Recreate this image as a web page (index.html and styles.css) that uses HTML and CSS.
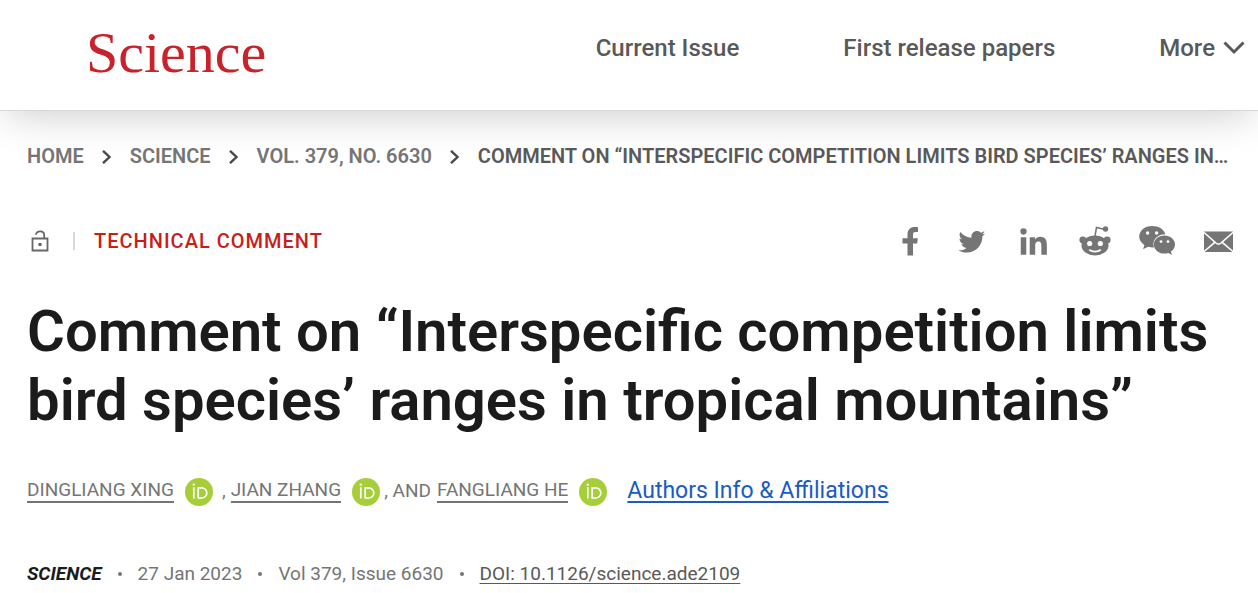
FILE: index.html
```html
<!DOCTYPE html>
<html lang="en">
<head>
<meta charset="utf-8">
<meta name="viewport" content="width=device-width, initial-scale=1">
<title>Comment on “Interspecific competition limits bird species’ ranges in tropical mountains” | Science</title>
<link rel="stylesheet" href="styles.css">
</head>
<body>
<svg class="symbols" aria-hidden="true">
  <symbol id="orcid" viewBox="0 0 28 28">
    <circle cx="14" cy="14" r="14" fill="#a6ce39"/>
    <path d="M8.8 9.3V20.500M13.2 9.3V20M12.4 9.8h4.3a5.1 5.1 0 0 1 0 10.2h-4.300" fill="none" stroke="#fff" stroke-width="1.700"/>
    <circle cx="8.800" cy="6.600" r="1.200" fill="#fff"/>
  </symbol>
  <symbol id="sep" viewBox="0 0 10 14">
    <path d="M1 .8l6.500 6.200L1 13.200" fill="none" stroke="#4a4a4a" stroke-width="2.400"/>
  </symbol>
</svg>
<header class="site-header">
  <a class="logo" href="#">Science</a>
  <nav class="main-nav" aria-label="Main">
    <a href="#">Current Issue</a>
    <a href="#">First release papers</a>
    <button class="more" type="button">More
      <svg width="22" height="14" viewBox="0 0 22 14" aria-hidden="true"><path d="M1.500 1.500L11 11l9.500-9.500" fill="none" stroke="currentColor" stroke-width="3"/></svg>
    </button>
  </nav>
</header>
<main class="article">
  <nav class="breadcrumb" aria-label="Breadcrumb">
    <a href="#">HOME</a>
    <svg class="sep" aria-hidden="true"><use href="#sep"/></svg>
    <a href="#">SCIENCE</a>
    <svg class="sep" aria-hidden="true"><use href="#sep"/></svg>
    <a href="#">VOL. 379, NO. 6630</a>
    <svg class="sep" aria-hidden="true"><use href="#sep"/></svg>
    <span class="current">COMMENT ON “INTERSPECIFIC COMPETITION LIMITS BIRD SPECIES’ RANGES IN TROPICAL MOUNTAINS”</span>
  </nav>
  <div class="meta-row">
    <div class="kind">
      <svg width="18" height="22" viewBox="0 0 18 22" fill="none" stroke="#666" stroke-width="1.800" aria-label="Open access"><path d="M1.500 8.500h15v12h-15zM5 4.800C5 .200 13.200.200 13.200 5v3.500"/><circle cx="9" cy="14.500" r="1.800" fill="#666" stroke="none"/></svg>
      <span class="divider"></span>
      <a href="#">TECHNICAL COMMENT</a>
    </div>
    <div class="share">
      <a href="#" aria-label="Facebook"><svg viewBox="0 0 36 36"><path d="M16.500 32.500V20.500h-5v-5.200h5v-3.800c0-5 3-7.500 7.300-7.500 1.500 0 2.400.1 3.200.2v4.700h-2.500c-2 0-2.500 1-2.500 2.500v3.900h4.800l-.600 5.200H22v12z"/></svg></a>
      <a href="#" aria-label="Twitter"><svg viewBox="-105 -105 692 692"><path d="M459.37 151.716c.325 4.548.325 9.097.325 13.645 0 138.72-105.583 298.558-298.558 298.558-59.452 0-114.68-17.219-161.137-47.106 8.447.974 16.568 1.299 25.34 1.299 49.055 0 94.213-16.568 130.274-44.832-46.132-.975-84.792-31.188-98.112-72.772 6.498.974 12.995 1.624 19.818 1.624 9.421 0 18.843-1.3 27.614-3.573-48.081-9.747-84.143-51.98-84.143-102.985v-1.299c13.969 7.797 30.214 12.67 47.431 13.319-28.264-18.843-46.781-51.005-46.781-87.391 0-19.492 5.197-37.36 14.294-52.954 51.655 63.675 129.3 105.258 216.365 109.807-1.624-7.797-2.599-15.918-2.599-24.04 0-57.828 46.782-104.934 104.934-104.934 30.213 0 57.502 12.67 76.67 33.137 23.715-4.548 46.456-13.32 66.599-25.34-7.798 24.366-24.366 44.833-46.132 57.827 21.117-2.273 41.584-8.122 60.426-16.243-14.292 20.791-32.161 39.308-52.628 54.253z"/></svg></a>
      <a href="#" aria-label="LinkedIn"><svg viewBox="-90 -90 608 608"><path d="M100.28 448H7.4V148.900h92.880zM53.790 108.100C24.090 108.100 0 83.500 0 53.800a53.790 53.790 0 0 1 107.580 0c0 29.700-24.100 54.300-53.790 54.300zM447.900 448h-92.680V302.400c0-34.700-.700-79.200-48.290-79.200-48.290 0-55.690 37.700-55.690 76.700V448h-92.780V148.900h89.080v40.800h1.300c12.400-23.500 42.690-48.300 87.880-48.300 94 0 111.280 61.900 111.280 142.300V448z"/></svg></a>
      <a href="#" aria-label="Reddit"><svg viewBox="0 0 36 36"><ellipse cx="18" cy="22.500" rx="13.500" ry="10"/><circle cx="5.800" cy="17" r="3.400"/><circle cx="30.200" cy="17" r="3.400"/><path d="M18 13l1.500-8.500 7.500 1.700" fill="none" stroke="#757575" stroke-width="1.500"/><circle cx="28.500" cy="6" r="2.700"/><circle cx="12.700" cy="20.500" r="2.600" fill="#fff"/><circle cx="23.300" cy="20.500" r="2.600" fill="#fff"/><path d="M12.200 26.700c3.300 2.500 8.300 2.500 11.600 0" fill="none" stroke="#fff" stroke-width="1.700"/></svg></a>
      <a href="#" aria-label="WeChat"><svg viewBox="0 0 36 36"><path d="M13 3C5.800 3 .2 7.700.2 13.600c0 3.600 2 6.500 5.200 8.500l-1.300 4.100 5-2.500c2 .6 3.800.8 5.800.7-2.300-7.500 3.500-13.200 11.400-13.200C25.200 6.500 19.700 3 13 3z"/><path d="M36 21.500c0-5-4.900-8.900-10.600-8.900S14.800 16.500 14.800 21.500s4.700 9.100 10.600 9.100c1.500 0 2.700-.2 4-.6l3.500 2-1-3.400c2.500-1.800 4.100-4.200 4.100-7.100z"/><g fill="#fff"><circle cx="8.600" cy="10" r="1.700"/><circle cx="17.600" cy="10" r="1.700"/><circle cx="22" cy="18.600" r="1.400"/><circle cx="29" cy="18.600" r="1.400"/></g></svg></a>
      <a href="#" aria-label="Email"><svg viewBox="0 0 36 36"><path d="M3 8.500h29v20.500h-29z"/><path d="M2.500 9l11.500 10.200L2.500 29M32.500 9L21 19.200 32.500 29M13.800 19c2.700 2.900 4.700 2.900 7.400 0" fill="none" stroke="#fff" stroke-width="1.600"/></svg></a>
    </div>
  </div>
  <h1>Comment on “Interspecific competition limits bird species’ ranges in tropical mountains”</h1>
  <div class="authors">
    <a class="author" href="#">DINGLIANG XING</a>
    <a class="orcid" href="#" aria-label="ORCID"><svg><use href="#orcid"/></svg></a>
    <span class="comma">,</span>
    <a class="author" href="#">JIAN ZHANG</a>
    <a class="orcid" href="#" aria-label="ORCID"><svg><use href="#orcid"/></svg></a>
    <span class="and">, AND</span>
    <a class="author" href="#">FANGLIANG HE</a>
    <a class="orcid" href="#" aria-label="ORCID"><svg><use href="#orcid"/></svg></a>
    <a class="info" href="#">Authors Info &amp; Affiliations</a>
  </div>
  <div class="issue">
    <strong>SCIENCE</strong><i class="dot"></i>
    <span>27 Jan 2023</span><i class="dot"></i>
    <span>Vol 379, Issue 6630</span><i class="dot"></i>
    <a href="#">DOI: 10.1126/science.ade2109</a>
  </div>
</main>
</body>
</html>
```

FILE: styles.css
```css
* { box-sizing: border-box; }
body {
  margin: 0;
  background: #fff;
  color: #757575;
  font-family: Roboto, "Liberation Sans", sans-serif;
}
a { color: inherit; text-decoration: none; }
.symbols { display: none; }
.site-header {
  display: flex;
  align-items: center;
  justify-content: space-between;
  height: 111px;
  padding: 0 13px 14px 86px;
  border-bottom: 1px solid #d9d9d9;
  box-shadow: 0 10px 40px -6px rgba(0, 0, 0, 0.2);
}
.logo {
  padding-top: 10px;
  color: #c8222a;
  font-family: "Liberation Serif", serif;
  font-size: 58px;
  line-height: 68px;
}
.main-nav {
  display: flex;
  align-items: center;
  gap: 104px;
  color: #595959;
  font-size: 24px;
  font-weight: 500;
}
.more {
  display: flex;
  align-items: center;
  gap: 8px;
  padding: 0;
  border: 0;
  background: none;
  color: inherit;
  font: inherit;
}
.article { padding: 30px 27px 0; }
.breadcrumb {
  display: flex;
  align-items: center;
  font-size: 20px;
  font-weight: 600;
  line-height: 30px;
  white-space: nowrap;
}
.sep {
  flex: none;
  width: 10px;
  height: 14px;
  margin: 2px 18px 0;
}
.current {
  min-width: 0;
  overflow: hidden;
  color: #595959;
  text-overflow: ellipsis;
}
.meta-row {
  display: flex;
  align-items: center;
  justify-content: space-between;
  margin-top: 52px;
}
.kind {
  display: flex;
  align-items: center;
  padding-left: 4px;
  color: #c81e1a;
  font-size: 20px;
  font-weight: 500;
  line-height: 30px;
  letter-spacing: 1px;
}
.divider {
  width: 2px;
  height: 18px;
  margin: 0 19px 0 24px;
  background: #d9d9d9;
}
.share {
  display: flex;
  gap: 26px;
  margin-right: -6px;
}
.share svg {
  display: block;
  width: 36px;
  height: 36px;
  fill: #757575;
}
h1 {
  margin: 38px 0 0;
  color: #1b1b1b;
  font-size: 58px;
  font-weight: 600;
  line-height: 69px;
}
.authors {
  display: flex;
  align-items: center;
  margin-top: 40px;
  font-size: 19px;
  line-height: 32px;
}
.author {
  border-bottom: 2px solid #757575;
  line-height: 22px;
}
.orcid { margin: 2px 9px 0 11px; }
.orcid svg {
  display: block;
  width: 28px;
  height: 28px;
}
.comma { margin-right: 5px; }
.and { margin: 0 6px 0 -5px; }
.info {
  margin-left: 11px;
  color: #1a5bc4;
  font-size: 23px;
  line-height: 30px;
  text-decoration: underline;
  text-decoration-thickness: 2px;
  text-underline-offset: 3px;
}
.issue {
  display: flex;
  align-items: center;
  margin-top: 52px;
  font-size: 19px;
  line-height: 30px;
}
.issue strong {
  color: #1b1b1b;
  font-style: italic;
  font-weight: 700;
}
.dot {
  width: 4px;
  height: 4px;
  margin: 0 16px;
  border-radius: 50%;
  background: #757575;
}
.issue a {
  color: #595959;
  text-decoration: underline;
  text-underline-offset: 3px;
}
```
